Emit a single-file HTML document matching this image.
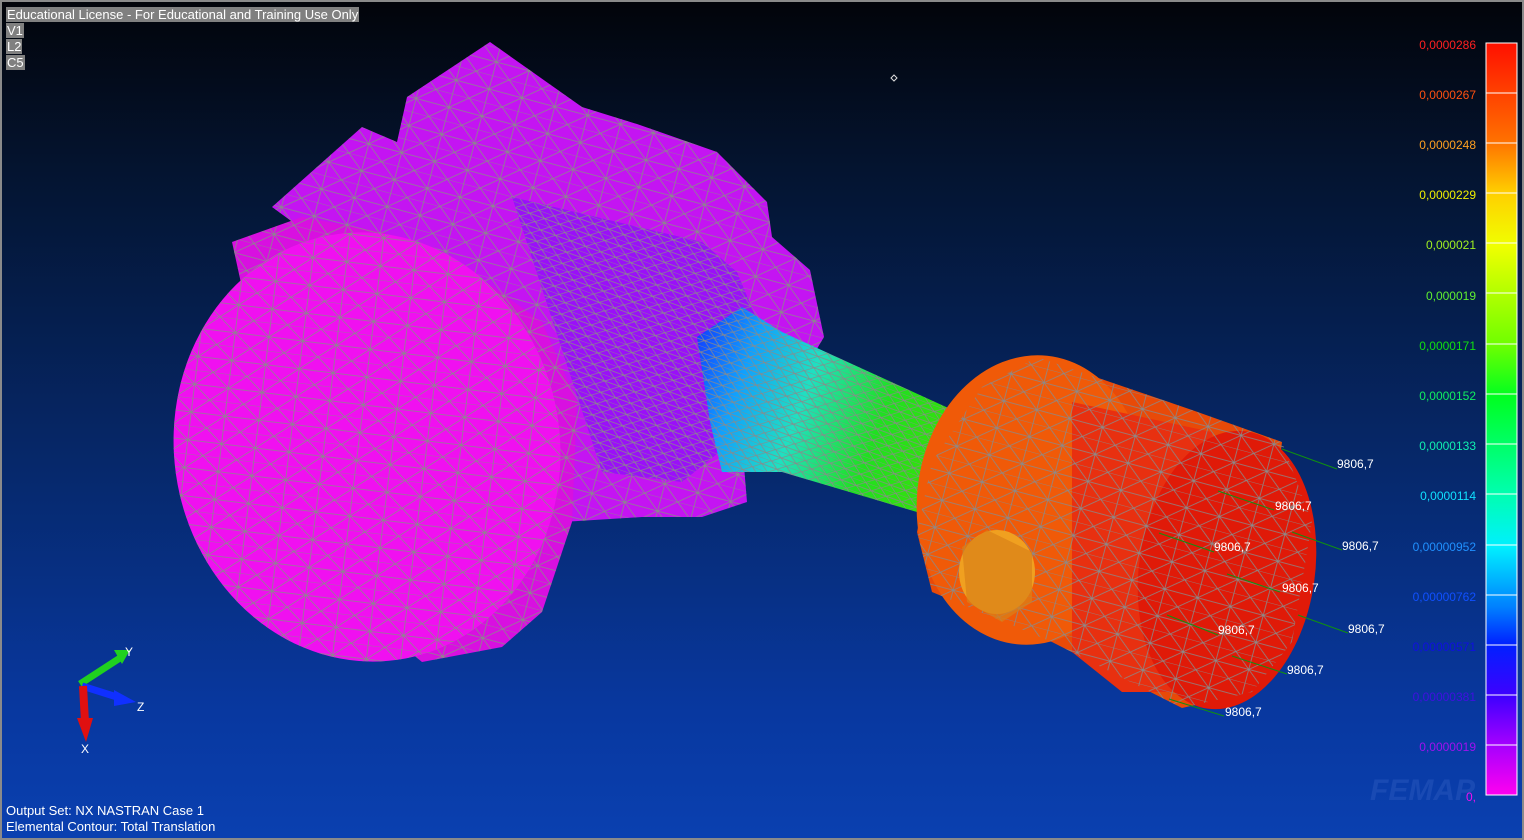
<!DOCTYPE html>
<html><head><meta charset="utf-8"><style>
html,body{margin:0;padding:0;width:1524px;height:840px;overflow:hidden;background:#000}
#f{position:absolute;left:0;top:0;width:1520px;height:836px;border:2px solid #8a8a8a;background:linear-gradient(#02040a 0%,#041430 20%,#06286a 55%,#0838a0 85%,#0a40b0 100%)}
.t{position:absolute;font:13px "Liberation Sans",sans-serif;color:#fff;line-height:16px}
.hl{background:#808080;padding:0 1px}
.lab{position:absolute;right:46px;font:12px "Liberation Sans",sans-serif;text-align:right}
</style></head><body>
<div id="f">
<svg width="1520" height="836" style="position:absolute;left:0;top:0">
<defs>
<pattern id="mesh" width="34" height="28" patternUnits="userSpaceOnUse" patternTransform="rotate(15)">
<path d="M0 0H34M0 14H34M0 0L17 14L34 0M0 28L17 14L34 28M17 0V28" stroke="#8a8a8a" stroke-width="0.8" fill="none"/>
</pattern>
<pattern id="mesh2" width="16" height="12" patternUnits="userSpaceOnUse" patternTransform="rotate(20)">
<path d="M0 0H16M0 6H16M0 0L8 6L16 0M0 12L8 6L16 12" stroke="#8a8a8a" stroke-width="0.7" fill="none"/>
</pattern>
<linearGradient id="rod" x1="0" y1="0" x2="1" y2="0.3">
<stop offset="0" stop-color="#1030ff"/><stop offset="0.25" stop-color="#10a0ff"/><stop offset="0.5" stop-color="#20e0c0"/><stop offset="0.8" stop-color="#20e020"/><stop offset="1" stop-color="#30e010"/>
</linearGradient>
<linearGradient id="leg" x1="0" y1="0" x2="0" y2="1">
<stop offset="0" stop-color="#ff1000"/><stop offset="0.13" stop-color="#ff7000"/><stop offset="0.2" stop-color="#ffd000"/><stop offset="0.27" stop-color="#f0ff00"/><stop offset="0.4" stop-color="#70ff00"/><stop offset="0.47" stop-color="#00ff20"/><stop offset="0.6" stop-color="#00ffb0"/><stop offset="0.67" stop-color="#00f0ff"/><stop offset="0.75" stop-color="#0080ff"/><stop offset="0.8" stop-color="#0020ff"/><stop offset="0.87" stop-color="#4000ff"/><stop offset="0.93" stop-color="#a000ff"/><stop offset="1" stop-color="#ff00f0"/>
</linearGradient>
</defs>
<!-- crank block -->
<path d="M270 205 L360 125 L395 140 L405 95 L488 40 L580 105 L635 122 L715 150 L765 200 L770 235 L808 268 L822 335 L800 372 L740 440 L745 500 L700 515 L640 515 L560 520 L520 470 L400 300 Z" fill="#c414f2"/>
<path d="M270 205 L360 125 L395 140 L405 95 L488 40 L580 105 L635 122 L715 150 L765 200 L770 235 L808 268 L822 335 L800 372 L740 440 L745 500 L700 515 L640 515 L560 520 L520 470 L400 300 Z" fill="url(#mesh)"/>
<path d="M510 195 L700 240 L735 270 L760 330 L730 440 L680 480 L600 470 Z" fill="#9a10f8"/>
<path d="M510 195 L700 240 L735 270 L760 330 L730 440 L680 480 L600 470 Z" fill="url(#mesh2)"/>
<!-- big disk body -->
<path d="M230 240 L300 215 L380 230 L470 270 L540 320 L575 400 L570 520 L540 610 L500 645 L420 660 L300 560 Z" fill="#d810e0"/>
<path d="M230 240 L300 215 L380 230 L470 270 L540 320 L575 400 L570 520 L540 610 L500 645 L420 660 L300 560 Z" fill="url(#mesh)"/>
<ellipse cx="365" cy="445" rx="193" ry="215" fill="#f010f0" transform="rotate(-8 365 445)"/>
<ellipse cx="365" cy="445" rx="193" ry="215" fill="url(#mesh)" transform="rotate(-8 365 445)"/>
<!-- rod -->
<path d="M695 335 L740 305 L780 330 L955 410 L950 470 L915 510 L780 470 L720 470 L708 420 Z" fill="url(#rod)"/>
<path d="M695 335 L740 305 L780 330 L955 410 L950 470 L915 510 L780 470 L720 470 L708 420 Z" fill="url(#mesh2)"/>
<!-- piston -->
<path d="M1035 355 L1190 408 L1280 440 L1250 690 L1180 706 L1050 640 L930 590 L915 530 L930 460 L980 385 Z" fill="#e84a08"/>
<ellipse cx="1030" cy="498" rx="115" ry="145" fill="#f05a08" transform="rotate(6 1030 498)"/>
<path d="M1070 400 L1210 430 L1240 690 L1120 690 L1070 650 Z" fill="#e83010"/>
<ellipse cx="1225" cy="568" rx="88" ry="140" fill="#e01a08" transform="rotate(8 1225 568)"/>
<path d="M1035 355 L1190 408 L1280 440 L1310 520 L1290 640 L1250 690 L1180 706 L1050 640 L930 590 L915 530 L930 460 L980 385 Z" fill="url(#mesh)"/>
<ellipse cx="995" cy="570" rx="38" ry="42" fill="#f0a020"/>
<path d="M960 545 L985 528 L1030 550 L1030 600 L1000 620 L965 600 Z" fill="#d88018" opacity="0.7"/>
<!-- load arrows -->
<g stroke="#109010" stroke-width="1" fill="none">
<path d="M1280 447 L1335 467 M1216 489 L1272 508 M1157 531 L1212 550 M1290 530 L1340 548 M1225 572 L1278 590 M1296 613 L1346 631 M1165 613 L1216 633 M1230 654 L1285 672 M1167 697 L1222 714"/>
</g>
<g font-family="Liberation Sans,sans-serif" font-size="12" fill="#fff">
<text x="1335" y="466">9806,7</text><text x="1273" y="508">9806,7</text><text x="1212" y="549">9806,7</text><text x="1340" y="548">9806,7</text><text x="1280" y="590">9806,7</text><text x="1346" y="631">9806,7</text><text x="1216" y="632">9806,7</text><text x="1285" y="672">9806,7</text><text x="1223" y="714">9806,7</text>
</g>
<!-- legend bar -->
<rect x="1484" y="41" width="31" height="752" fill="url(#leg)" stroke="#fff" stroke-width="1"/>
<g stroke="#fff" stroke-width="1">
<path d="M1484 91H1515M1484 141H1515M1484 191H1515M1484 241H1515M1484 291H1515M1484 342H1515M1484 392H1515M1484 442H1515M1484 492H1515M1484 543H1515M1484 593H1515M1484 643H1515M1484 693H1515M1484 743H1515"/>
</g>
<text x="1368" y="798" font-family="Liberation Sans,sans-serif" font-size="30" font-style="italic" font-weight="bold" fill="#2050b8" opacity="0.7">FEMAP</text>
<!-- triad -->
<path d="M78 682 L118 656" stroke="#20d020" stroke-width="7"/><path d="M112 648 L128 648 L120 662Z" fill="#20d020"/>
<path d="M80 684 L118 696" stroke="#1030ff" stroke-width="7"/><path d="M112 688 L134 700 L112 704Z" fill="#1030ff"/>
<path d="M81 684 L83 720" stroke="#e01010" stroke-width="8"/><path d="M75 716 L91 716 L84 740Z" fill="#e01010"/>
<g font-family="Liberation Sans,sans-serif" font-size="12" fill="#fff"><text x="123" y="654">Y</text><text x="135" y="709">Z</text><text x="79" y="751">X</text></g>
<path d="M892 73 L895 76 L892 79 L889 76Z" fill="none" stroke="#ddd"/>
</svg>
<div class="t" style="left:4px;top:5px"><span class="hl">Educational License - For Educational and Training Use Only</span><br><span class="hl">V1</span><br><span class="hl">L2</span><br><span class="hl">C5</span></div>
<div class="t" style="left:4px;top:801px">Output Set: NX NASTRAN Case 1<br>Elemental Contour: Total Translation</div>
<div class="lab" style="top:36px;color:#ff2020">0,0000286</div>
<div class="lab" style="top:86px;color:#ff5010">0,0000267</div>
<div class="lab" style="top:136px;color:#ffa020">0,0000248</div>
<div class="lab" style="top:186px;color:#f0f000">0,0000229</div>
<div class="lab" style="top:236px;color:#a0f020">0,000021</div>
<div class="lab" style="top:287px;color:#60f030">0,000019</div>
<div class="lab" style="top:337px;color:#10e010">0,0000171</div>
<div class="lab" style="top:387px;color:#10f060">0,0000152</div>
<div class="lab" style="top:437px;color:#10f0b0">0,0000133</div>
<div class="lab" style="top:487px;color:#10e0ff">0,0000114</div>
<div class="lab" style="top:538px;color:#2090ff">0,00000952</div>
<div class="lab" style="top:588px;color:#1050ff">0,00000762</div>
<div class="lab" style="top:638px;color:#1010e0">0,00000571</div>
<div class="lab" style="top:688px;color:#4010e0">0,00000381</div>
<div class="lab" style="top:738px;color:#a010f0">0,0000019</div>
<div class="lab" style="top:788px;color:#f010f0">0,</div>
</div>
</body></html>
